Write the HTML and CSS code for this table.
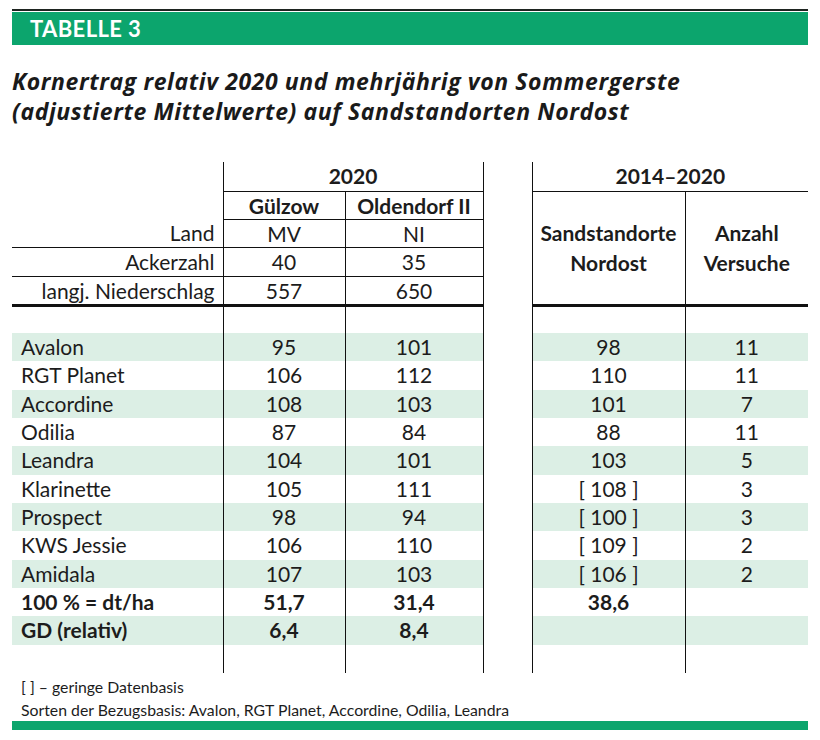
FILE: index.html
```html
<!DOCTYPE html>
<html lang="de">
<head>
<meta charset="utf-8">
<title>Tabelle 3</title>
<link rel="stylesheet" href="styles.css">
</head>
<body>
<div class="page">
  <div class="topline"></div>
  <div class="banner">TABELLE 3</div>
  <h1 class="title">Kornertrag relativ 2020 und mehrjährig von Sommergerste<br>(adjustierte Mittelwerte) auf Sandstandorten Nordost</h1>
  <table class="data">
    <colgroup>
      <col class="c-label"><col class="c-gul"><col class="c-old"><col class="c-gap"><col class="c-sand"><col class="c-anz">
    </colgroup>
    <tr class="h1">
      <td class="lab"></td>
      <td class="bl bb b" colspan="2">2020</td>
      <td class="gap"></td>
      <td class="bb b" colspan="2">2014–2020</td>
    </tr>
    <tr class="h2">
      <td class="lab"></td>
      <td class="bl bb b">Gülzow</td>
      <td class="bl bb b">Oldendorf II</td>
      <td class="gap"></td>
      <td class="bthick b two" rowspan="4">Sandstandorte<br>Nordost</td>
      <td class="bl bthick b two" rowspan="4">Anzahl<br>Versuche</td>
    </tr>
    <tr class="h3">
      <td class="lab r bb">Land</td>
      <td class="bl bb">MV</td>
      <td class="bl bb">NI</td>
      <td class="gap"></td>
    </tr>
    <tr class="h4">
      <td class="lab r bb">Ackerzahl</td>
      <td class="bl bb">40</td>
      <td class="bl bb">35</td>
      <td class="gap"></td>
    </tr>
    <tr class="h5">
      <td class="lab r bthick">langj. Niederschlag</td>
      <td class="bl bthick">557</td>
      <td class="bl bthick">650</td>
      <td class="gap"></td>
    </tr>
    <tr class="sp">
      <td class="lab"></td><td class="bl"></td><td class="bl"></td><td class="gap"></td><td></td><td class="bl"></td>
    </tr>
    <tr class="row sh">
      <td class="lab">Avalon</td><td class="bl">95</td><td class="bl">101</td><td class="gap"></td><td>98</td><td class="bl">11</td>
    </tr>
    <tr class="row">
      <td class="lab">RGT Planet</td><td class="bl">106</td><td class="bl">112</td><td class="gap"></td><td>110</td><td class="bl">11</td>
    </tr>
    <tr class="row sh">
      <td class="lab">Accordine</td><td class="bl">108</td><td class="bl">103</td><td class="gap"></td><td>101</td><td class="bl">7</td>
    </tr>
    <tr class="row">
      <td class="lab">Odilia</td><td class="bl">87</td><td class="bl">84</td><td class="gap"></td><td>88</td><td class="bl">11</td>
    </tr>
    <tr class="row sh">
      <td class="lab">Leandra</td><td class="bl">104</td><td class="bl">101</td><td class="gap"></td><td>103</td><td class="bl">5</td>
    </tr>
    <tr class="row">
      <td class="lab">Klarinette</td><td class="bl">105</td><td class="bl">111</td><td class="gap"></td><td>[ 108 ]</td><td class="bl">3</td>
    </tr>
    <tr class="row sh">
      <td class="lab">Prospect</td><td class="bl">98</td><td class="bl">94</td><td class="gap"></td><td>[ 100 ]</td><td class="bl">3</td>
    </tr>
    <tr class="row">
      <td class="lab">KWS Jessie</td><td class="bl">106</td><td class="bl">110</td><td class="gap"></td><td>[ 109 ]</td><td class="bl">2</td>
    </tr>
    <tr class="row sh">
      <td class="lab">Amidala</td><td class="bl">107</td><td class="bl">103</td><td class="gap"></td><td>[ 106 ]</td><td class="bl">2</td>
    </tr>
    <tr class="row bold">
      <td class="lab">100 % = dt/ha</td><td class="bl">51,7</td><td class="bl">31,4</td><td class="gap"></td><td>38,6</td><td class="bl"></td>
    </tr>
    <tr class="row sh bold">
      <td class="lab">GD (relativ)</td><td class="bl">6,4</td><td class="bl">8,4</td><td class="gap"></td><td></td><td class="bl"></td>
    </tr>
    <tr class="sp2">
      <td class="lab"></td><td class="bl"></td><td class="bl"></td><td class="gap"></td><td></td><td class="bl"></td>
    </tr>
  </table>
  <div class="notes">
    <p>[ ] – geringe Datenbasis</p>
    <p>Sorten der Bezugsbasis: Avalon, RGT Planet, Accordine, Odilia, Leandra</p>
  </div>
  <div class="bottombar"></div>
</div>
</body>
</html>
```

FILE: styles.css
```css
html, body {
  margin: 0;
  padding: 0;
  background: #ffffff;
}

body {
  font-family: Lato, "Open Sans", sans-serif;
  color: #1c1c1c;
}

.page {
  width: 796px;
  padding: 9px 12px 0 12px;
}

.topline {
  height: 2px;
  background: #1e2420;
}

.banner {
  margin-top: 1px;
  height: 33px;
  line-height: 33px;
  background: #0ca56d;
  color: #ffffff;
  font-weight: 700;
  font-size: 22px;
  padding-left: 18px;
  letter-spacing: 0.4px;
}

.title {
  margin: 21px 0 0 0;
  font-family: "Open Sans", Lato, sans-serif;
  font-size: 23px;
  line-height: 30px;
  font-weight: 700;
  font-style: italic;
  letter-spacing: 0.6px;
  color: #1a1a1a;
}

.data {
  margin-top: 36px;
  border-collapse: collapse;
  table-layout: fixed;
  width: 796px;
  font-size: 21px;
}

.c-label { width: 211px; }
.c-gul { width: 122px; }
.c-old { width: 138px; }
.c-gap { width: 49px; }
.c-sand { width: 153px; }
.c-anz { width: 123px; }

.data td {
  padding: 0;
  text-align: center;
  white-space: nowrap;
  vertical-align: middle;
}

.data td.lab {
  text-align: left;
  padding-left: 9px;
}

.data td.lab.r {
  text-align: right;
  padding-right: 8px;
  padding-left: 0;
}

.data td.gap {
  border-left: 1px solid #111;
  border-right: 1px solid #111;
  background: #ffffff;
}

.data td.bl { border-left: 1px solid #111; }
.data td.bb { border-bottom: 1px solid #111; }
.data td.bthick { border-bottom: 3px solid #111; }
.data td.b { font-weight: 700; }
.data td.two { line-height: 30px; }

.h1 td { height: 28.5px; line-height: 28.5px; }
.h2 td { height: 27px; line-height: 27px; }
.h3 td { height: 27.5px; line-height: 27.5px; }
.h4 td { height: 27.5px; line-height: 27.5px; }
.h5 td { height: 27.5px; line-height: 27.5px; }
.sp td { height: 26px; }
.sp2 td { height: 28px; }

.row td {
  height: 28.35px;
  line-height: 28.35px;
}

.row.sh td { background: #dcefe5; }
.row.sh td.gap { background: #ffffff; }
.row.bold td { font-weight: 700; }

.notes {
  margin-top: 2px;
  padding-left: 9px;
  font-size: 15.8px;
  line-height: 23.3px;
}

.notes p { margin: 0; }

.bottombar {
  margin-top: 0;
  height: 9px;
  background: #0ca56d;
}
```
